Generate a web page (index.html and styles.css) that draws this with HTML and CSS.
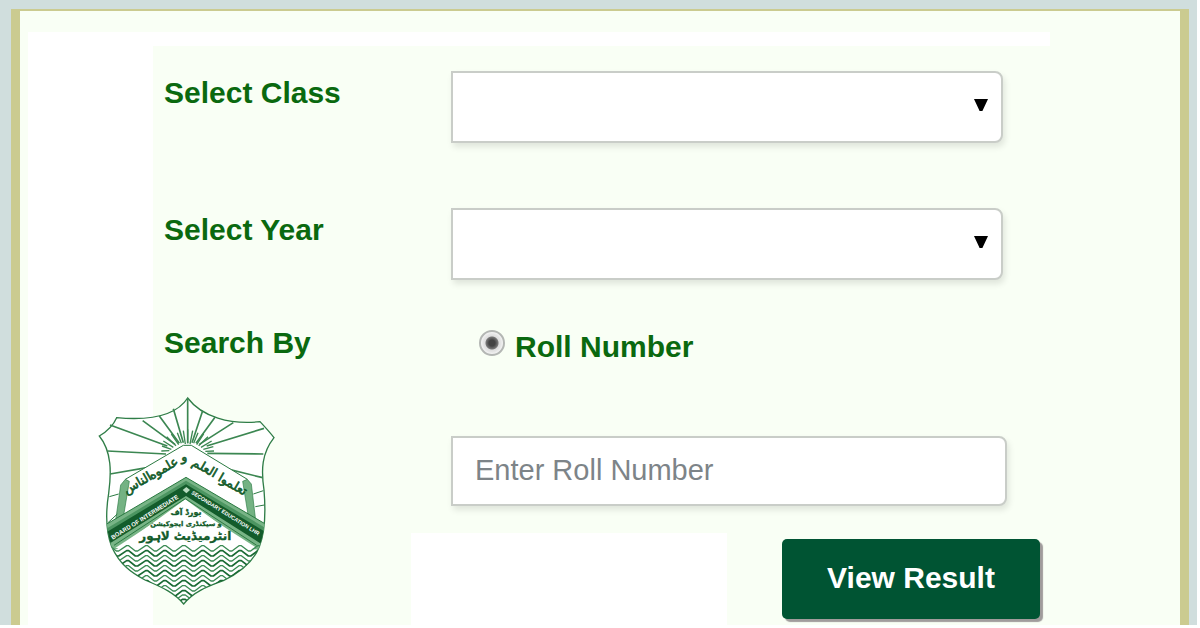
FILE: index.html
```html
<!DOCTYPE html>
<html lang="en">
<head>
    <meta charset="UTF-8">
    <meta name="viewport" content="width=device-width, initial-scale=1.0">
    <title>View Result | BISE Lahore</title>
    <link rel="stylesheet" href="styles.css">
</head>
<body>
    <div class="page">
        <main class="frame">
            <div class="top-strip"></div>

            <div class="content">
                <!-- Side column with the board emblem -->
                <aside class="side">
                    <svg class="emblem" viewBox="0 0 570 660" role="img" aria-label="Board emblem">
                        <defs>
                            <clipPath id="shield-clip">
                                <path d="M293 24Q245 98 80 83Q66 115 28 138C66 185 64 250 56 310C48 360 46 420 65 470C90 525 125 548 165 570C220 593 255 610 281 642C310 606 350 590 400 572C450 548 490 515 508 470C528 420 527 360 522 300C513 240 515 190 552 143Q538 125 510 95C420 105 335 80 293 24Z"/>
                            </clipPath>
                            <path id="wave" d="M24 18L53 0L59 0L79 16L86 16L110 0L116 0L136 16L143 16L167 0L173 0L193 16L200 16L221 0L228 0L249 16L256 16L277 0L286 0L307 16L314 16L335 0L342 0L363 16L370 16L391 0L398 0L419 16L426 16L447 0L454 0L475 16L482 16L503 0L510 0L534 18"/>
                        </defs>

                        <path class="shield" d="M293 24Q245 98 80 83Q66 115 28 138C66 185 64 250 56 310C48 360 46 420 65 470C90 525 125 548 165 570C220 593 255 610 281 642C310 606 350 590 400 572C450 548 490 515 508 470C528 420 527 360 522 300C513 240 515 190 552 143Q538 125 510 95C420 105 335 80 293 24Z"/>

                        <!-- Sun rays -->
                        <path class="ray" d="M293 24V160M338 62L306 158M375 82L318 160M430 98L328 163M522 115L350 168M520 192L352 190M518 263L405 235M250 56L280 158M208 78L268 160M158 92L255 163M60 105L232 168M52 183L228 192M60 252L175 232"/>
                        <path class="ray-short" d="M286 162L280 122M274 160L262 128M266 164L244 132M258 167L230 140M250 172L220 153M244 178L216 168M238 182L214 183M300 162L308 122M311 160L324 128M320 164L341 132M326 167L354 140M333 172L365 153M340 178L370 170M346 184L372 183M293 160V118"/>

                        <!-- Open book -->
                        <path class="book" d="M280 166H304L472 268L500 400L288 284L76 398L106 268Z"/>
                        <path class="page-edge" d="M106 268L118 274L100 382L76 398L92 285ZM472 268L458 274L476 386L498 400L484 282Z"/>
                        <path class="line" d="M106 268L280 166H304L472 268M58 320L86 312M54 398L82 372M490 312L520 302M496 350L523 345"/>

                        <!-- Ribbon -->
                        <g clip-path="url(#shield-clip)">
                            <path class="ribbon-light" d="M288 262L30 414V474L80 478L286 328L492 478L550 480V416Z"/>
                            <path class="ribbon-mid" d="M288 272L30 428V440L288 286L550 442V428Z"/>
                            <path class="ribbon-dark" d="M288 283L30 438V474L60 460L288 318L514 462L550 480V440Z"/>
                            <path class="line" d="M288 262L30 414M288 262L550 416M286 326L72 466M286 326L500 466"/>
                        </g>
                        <path class="panel" d="M286 336L76 474L500 474Z"/>
                        <path class="diamond" d="M289 291L300 300L289 310L278 300Z"/>

                        <text class="ribbon-text" transform="translate(68 449) rotate(-32)">BOARD OF INTERMEDIATE</text>
                        <text class="ribbon-text small" transform="translate(303 311) rotate(32)">SECONDARY EDUCATION LHR</text>

                        <text class="motto" transform="translate(148 290) rotate(-30)" direction="rtl">الناس</text>
                        <text class="motto" transform="translate(226 246) rotate(-30)" direction="rtl">علموه</text>
                        <text class="motto" transform="translate(283 212)" direction="rtl">و</text>
                        <text class="motto" transform="translate(338 244) rotate(30)" direction="rtl">العلم</text>
                        <text class="motto" transform="translate(422 294) rotate(30)" direction="rtl">تعلموا</text>

                        <text class="urdu" x="288" y="376" direction="rtl">بورڈ آف</text>
                        <text class="urdu small" x="288" y="409" direction="rtl">و سیکنڈری ایجوکیشن</text>
                        <text class="urdu large" x="286" y="450" direction="rtl">انٹرمیڈیٹ لاہور</text>

                        <!-- Water -->
                        <g class="water" clip-path="url(#shield-clip)">
                            <use href="#wave" y="467"/>
                            <use href="#wave" y="482" class="bold"/>
                            <use href="#wave" y="497"/>
                            <use href="#wave" y="512" class="bold"/>
                            <use href="#wave" y="527"/>
                            <use href="#wave" y="542" class="bold"/>
                            <use href="#wave" y="557"/>
                            <use href="#wave" y="572" class="bold"/>
                            <use href="#wave" y="587"/>
                            <use href="#wave" y="602" class="bold"/>
                            <use href="#wave" y="615"/>
                            <use href="#wave" y="628" class="bold"/>
                        </g>
                    </svg>
                </aside>

                <!-- Result search form -->
                <form class="result-form">
                    <div class="row">
                        <label for="class">Select Class</label>
                        <div class="select-box">
                            <select id="class" name="class">
                                <option value=""></option>
                            </select>
                        </div>
                    </div>

                    <div class="row">
                        <label for="year">Select Year</label>
                        <div class="select-box">
                            <select id="year" name="year">
                                <option value=""></option>
                            </select>
                        </div>
                    </div>

                    <div class="row search-row">
                        <span class="row-title">Search By</span>
                        <div class="radio-box">
                            <input type="radio" id="by-roll" name="search-by" checked>
                            <label for="by-roll">Roll Number</label>
                        </div>
                    </div>

                    <div class="row">
                        <input class="roll-input" type="text" name="roll" placeholder="Enter Roll Number" aria-label="Roll Number">
                    </div>

                    <div class="actions">
                        <div class="blank"></div>
                        <button type="submit">View Result</button>
                    </div>
                </form>
            </div>
        </main>
    </div>
</body>
</html>
```

FILE: styles.css
```css
* {
    box-sizing: border-box;
}

body {
    display: flex;
    min-height: 100vh;
    margin: 0;
    padding: 0 3px 3px 0;
    font-family: "Liberation Sans", Arial, sans-serif;
    background: #fff;
}

.page {
    display: flex;
    flex: 1;
    padding: 9px 8px 0 11px;
    background: #d0dedd;
}

.frame {
    display: flex;
    flex-direction: column;
    flex: 1;
    padding: 21px 0 0 8px;
    border: solid #cbcb90;
    border-width: 2px 9px 0;
    background: #f9fff5;
}

.top-strip {
    max-width: 1022px;
    height: 14px;
    background: #fff;
}

.content {
    display: flex;
    flex: 1;
}

/* Emblem */
.side {
    position: relative;
    flex: 0 0 125px;
    background: #fff;
}

.emblem {
    position: absolute;
    top: 344px;
    left: 62px;
    width: 190px;
    height: 220px;
}

.shield {
    fill: #fff;
    stroke: #2f7d47;
    stroke-width: 4;
}

.ray,
.ray-short,
.line {
    fill: none;
    stroke: #3c8752;
    stroke-width: 5;
}

.ray-short {
    stroke-width: 4;
}

.line {
    stroke: #2b7a42;
    stroke-width: 3;
}

.page-edge {
    fill: #74b283;
    stroke: #2f7d47;
    stroke-width: 2;
}

.book,
.panel {
    fill: #fff;
}

.ribbon-light {
    fill: #78b486;
}

.ribbon-mid {
    fill: #4c9561;
}

.ribbon-dark {
    fill: #135c2b;
}

.diamond {
    fill: #b9dcc0;
}

.ribbon-text {
    font-size: 18px;
    font-weight: bold;
    fill: #fff;
}

.ribbon-text.small {
    font-size: 16px;
}

.motto,
.urdu {
    font-family: "DejaVu Sans", sans-serif;
    text-anchor: middle;
    fill: #135c2b;
    stroke: #135c2b;
}

.motto {
    font-size: 38px;
    stroke-width: 2;
}

.urdu {
    font-size: 24px;
    font-weight: bold;
    stroke-width: 1;
}

.urdu.small {
    font-size: 20px;
}

.urdu.large {
    font-size: 36px;
}

.water {
    fill: none;
    stroke: #3c8b55;
    stroke-width: 4;
    stroke-linejoin: round;
}

.water .bold {
    stroke: #1a6a34;
    stroke-width: 5;
}

/* Form */
.result-form {
    flex: 1;
    padding: 25px 11px 0;
}

.row {
    display: grid;
    grid-template-columns: 287px minmax(0, 556px);
    align-items: start;
    margin-bottom: 65px;
}

.row label,
.row-title {
    font-size: 30px;
    font-weight: bold;
    line-height: 44px;
    color: #0a690f;
}

.select-box {
    position: relative;
    margin-right: 4px;
}

.select-box::after {
    content: "";
    position: absolute;
    top: 28px;
    right: 15px;
    width: 14px;
    height: 12px;
    background: #000;
    clip-path: polygon(0 0, 100% 0, 60% 100%, 40% 100%);
    pointer-events: none;
}

select,
.roll-input {
    display: block;
    width: 100%;
    height: 72px;
    padding: 0 22px;
    border: 2px solid #c9cdc8;
    border-radius: 0 8px 8px 0;
    background: #fff;
    box-shadow: 2px 4px 6px rgba(0, 0, 0, 0.1);
    font-family: inherit;
    font-size: 29px;
    color: #333;
    appearance: none;
}

.roll-input {
    grid-column: 2;
    height: 70px;
    padding-bottom: 2px;
}

.roll-input::placeholder {
    color: #7d8488;
    opacity: 1;
}

.search-row {
    margin: -20px 0 67px;
}

.search-row .row-title {
    line-height: 36px;
}

.radio-box {
    display: flex;
    align-items: flex-start;
    gap: 10px;
    padding-left: 28px;
}

.radio-box input {
    width: 26px;
    height: 26px;
    margin: 5px 0 0;
    border: 2px solid #b4b7b4;
    border-radius: 50%;
    background: radial-gradient(circle, #444 0 3px, #777 6px, #dedede 7px, #e6e6e6 9px, #f4f4f4 11px);
    appearance: none;
}

.actions {
    display: flex;
    align-items: flex-start;
    gap: 55px;
    margin: -38px 0 0 247px;
}

.blank {
    flex: 0 1 316px;
    height: 92px;
    background: #fff;
}

button {
    width: 258px;
    height: 80px;
    margin-top: 6px;
    padding-bottom: 3px;
    border: none;
    border-radius: 5px;
    background: #005433;
    box-shadow: 3px 3px 1px #a09c9c;
    font-family: inherit;
    font-size: 30px;
    font-weight: bold;
    color: #fff;
    cursor: pointer;
}
```
